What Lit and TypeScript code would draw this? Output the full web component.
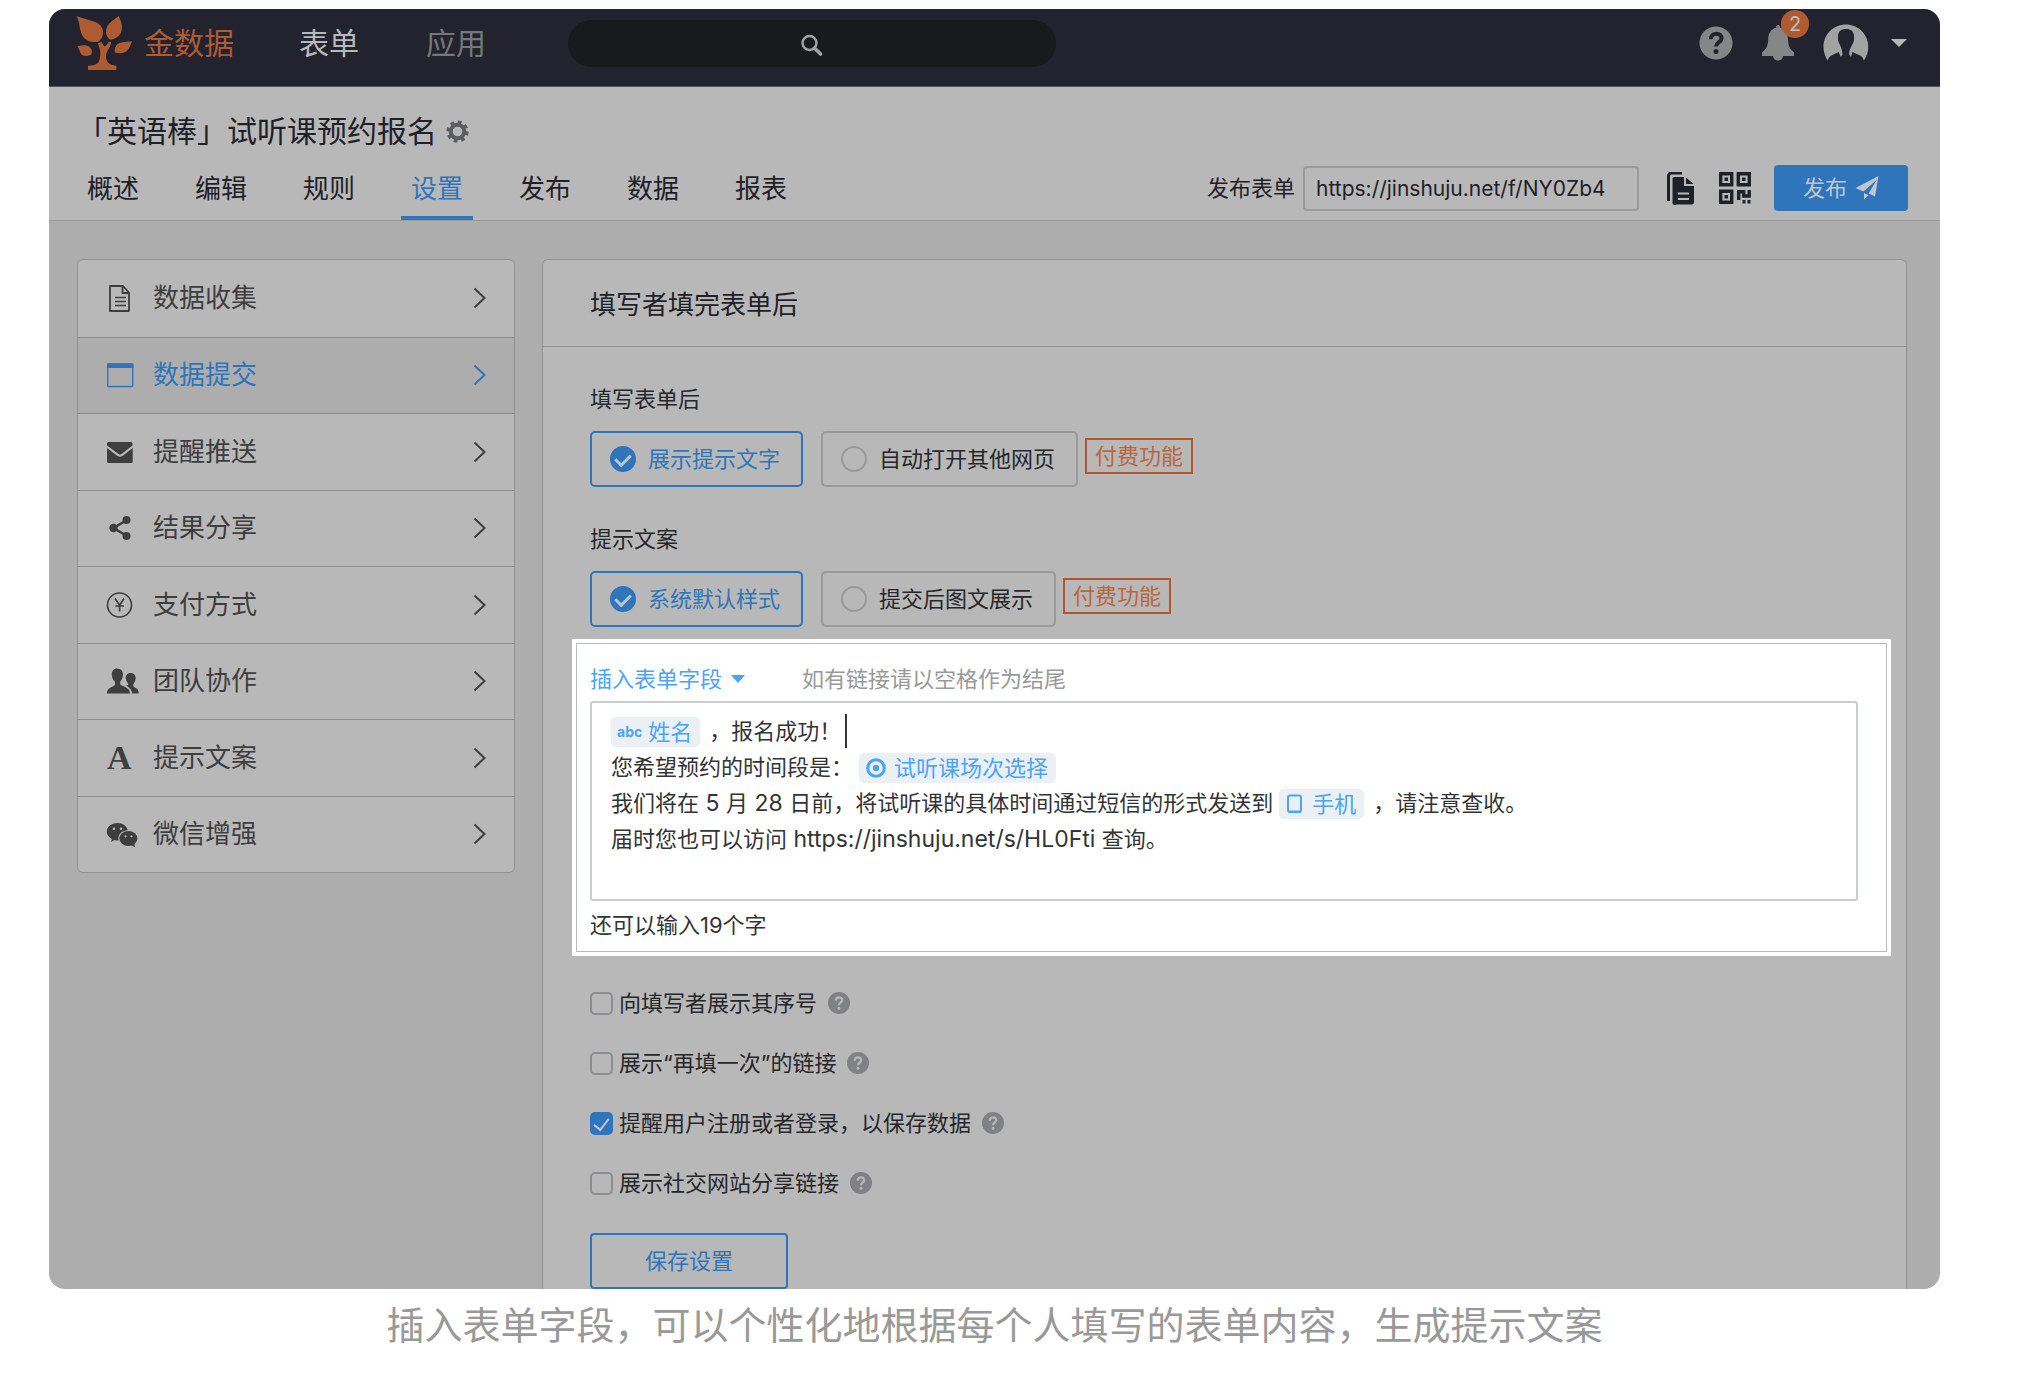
import { LitElement, html, css, svg, nothing } from "lit";
import { customElement, property, state } from "lit/decorators.js";
import { classMap } from "lit/directives/class-map.js";

const MENU_ICONS: Record<string, unknown> = {
  doc: svg`<path d="M4 2h13l6 6.5V27H4z M16.500 2v7H23" fill="none" stroke="currentColor" stroke-width="1.800" stroke-linejoin="round"/><path d="M9 13.500h11M9 17.500h11M9 21.500h11" fill="none" stroke="currentColor" stroke-width="1.600"/>`,
  window: svg`<rect x="1.700" y="3" width="25" height="22.500" rx="1" fill="none" stroke="currentColor" stroke-width="1.400"/><path d="M1 2.500h26.500V7H1z" fill="currentColor"/>`,
  mail: svg`<path d="M2.500 4h22.500a1.500 1.500 0 0 1 1.500 1.500V7.500L15.500 16q-1.500 1-3 0L1 7.500V5.500A1.500 1.500 0 0 1 2.500 4z M1 10l10.500 8q2.500 1.600 5 0L26.700 10v13.500a1.500 1.500 0 0 1-1.500 1.500H2.500A1.500 1.500 0 0 1 1 23.500z" fill="currentColor"/>`,
  share: svg`<path d="M21 6L7.500 14L21 22" fill="none" stroke="currentColor" stroke-width="2.600"/><circle cx="20.500" cy="6" r="4" fill="currentColor"/><circle cx="7.500" cy="14" r="4.200" fill="currentColor"/><circle cx="20.500" cy="22" r="4" fill="currentColor"/>`,
  yen: svg`<circle cx="13.500" cy="14" r="12" fill="none" stroke="currentColor" stroke-width="1.600"/><path d="M9 7.500l4.600 6.700L18 7.500M13.600 14v6.500M9.300 15h8.600" fill="none" stroke="currentColor" stroke-width="1.700"/>`,
  team: svg`<path d="M11 1.500c3.800 0 6.300 2.800 6 6.500-.3 3.500-1.800 5.500-2.800 6.800-.3 2.200 0 3 2 3.900 3.300 1.500 7.300 2.300 8 7.800H.800c.3-4.500 3-5.800 6.500-7.300 2-1 2-1.900 1.700-4.400-1.300-1.300-3-3.500-3.200-6.800C5.500 4 7.700 1.500 11 1.500z" fill="currentColor"/><path d="M24.600 6c3.300 0 5.300 2.400 5 5.500-.2 3-1.400 4.600-2.300 5.700-.2 2 .2 2.700 1.600 3.400 2.200 1.100 3.600 1.800 3.800 5.900h-6.500c-.6-4-3-6.300-5.800-7.700 1.500-.7 2.100-1.200 2-2-1-1.200-2.300-2.800-2.600-5.300-.3-3.100 1.500-5.500 4.800-5.500z" fill="currentColor"/>`,
  wechat: svg`<path d="M11.500 3C17 3 21 6.400 21.700 10.300c-5.400.2-9.300 3.600-9.300 8 0 .8.100 1.500.4 2.200-1.500.1-3-.1-4.400-.5L5 22l.9-3C2.700 17.200.800 14.700.800 11.700.800 6.800 5.500 3 11.500 3z" fill="currentColor"/><ellipse cx="22.400" cy="18.500" rx="9" ry="7.600" fill="currentColor"/><path d="M25 25l4 2.200-.8-4.200z" fill="currentColor"/><g fill="#b8b8b8"><circle cx="8" cy="8.700" r="1.300"/><circle cx="15" cy="8.700" r="1.300"/><circle cx="19.500" cy="16.300" r="1.100"/><circle cx="25.500" cy="16.300" r="1.100"/></g>`,
};

const MENU = [
  { label: "数据收集", icon: "doc" },
  { label: "数据提交", icon: "window", active: true },
  { label: "提醒推送", icon: "mail" },
  { label: "结果分享", icon: "share" },
  { label: "支付方式", icon: "yen" },
  { label: "团队协作", icon: "team" },
  { label: "提示文案", icon: "letter" },
  { label: "微信增强", icon: "wechat" },
];

const TABS = ["概述", "编辑", "规则", "设置", "发布", "数据", "报表"];

const shared = css`
  :host {
    display: block;
    font-family: Inter, "Noto Sans CJK SC", sans-serif;
    line-height: 32px;
  }
  * {
    box-sizing: border-box;
  }
  a {
    color: inherit;
    text-decoration: none;
  }
  button,
  input {
    font: inherit;
    color: inherit;
    margin: 0;
  }
  button {
    background: none;
    border: 0;
    padding: 0;
    cursor: pointer;
  }
  svg {
    display: block;
    flex: none;
  }
`;

@customElement("top-bar")
class TopBar extends LitElement {
  static styles = [
    shared,
    css`
      .bar {
        display: flex;
        align-items: center;
        height: 78px;
        padding: 0 33px 9px 27px;
        background: #22232e;
        border-bottom: 1px solid #55555a;
        font-size: 30px;
      }
      .brand {
        display: flex;
        align-items: center;
        gap: 10px;
        color: #ae5b32;
      }
      .nav {
        display: flex;
        gap: 67px;
        margin-left: 65px;
        color: #b8b8b8;
      }
      .muted {
        color: #77777a;
      }
      .search {
        position: relative;
        flex: 0 1 488px;
        margin-left: 82px;
      }
      .search input {
        display: block;
        width: 100%;
        height: 47px;
        padding: 0 24px;
        border: 0;
        border-radius: 24px;
        outline: 0;
        background: #191a1e;
        font-size: 22px;
        color: #b8b8b8;
      }
      .glass {
        position: absolute;
        left: calc(50% - 11px);
        top: 14px;
        pointer-events: none;
      }
      .tools {
        display: flex;
        align-items: center;
        gap: 28px;
        margin-left: auto;
      }
      .bell {
        position: relative;
      }
      .count {
        position: absolute;
        left: 20px;
        top: -15px;
        width: 28px;
        height: 28px;
        border-radius: 14px;
        background: #ae5b32;
        color: #c4bdb8;
        font-size: 20px;
        line-height: 28px;
        text-align: center;
      }
      .account {
        display: flex;
        align-items: center;
        gap: 22px;
      }
    `,
  ];

  render() {
    return html`<header class="bar">
      <a class="brand" href="#">
        <svg width="58" height="56" viewBox="76 14 58 56" fill="#ae5b32" aria-hidden="true">
          <path d="M76.500 15c6 3 14 3.500 20 6.500 5 2.500 7.200 7 6.300 12-.6 3.500-2.500 6-5 7.500-7 .5-13-1.500-15.500-6.500C79 28 80 21 76.500 15z"/>
          <path d="M118.700 15c2 4.500 3.800 8.500 3.200 13.500-.8 5.500-5.500 9.300-11.500 10.200-3.500-2-4.900-5.700-4.200-10C107.300 22 114 19 118.700 15z"/>
          <path d="M77.300 45.500c5-1.800 10-1.500 12.500.8 2.200 2 2.600 4.300 1.700 7-2.500 1.700-6.500 2.200-9.200.7-2.300-1.500-2.700-6-5-8.500z"/>
          <path d="M132.200 40c-2 4-2.500 8-6 10.500-3 2-7.500 2-11.400 1-.5-3.500.3-6.500 3-8.500 4-2.800 9.500-1.700 14.400-3z"/>
          <path d="M98 42.300l3.500-1.300c1.500 2.500 2.300 4 3.300 4.500 1.500-.7 2.500-2.500 4-5l2.400.7c-.5 5-4 7.500-5 12-.7 4 .3 7.500 3.300 9.500 2 1.200 4.500 1.700 6.900 1.800V69H88v-4.300c4.500-.2 8.300-.7 10.300-3.200 2-3 2.200-8.500 1.700-12-.3-2.700-1.300-5-2-7.200z"/>
        </svg>
        <span>金数据</span>
      </a>
      <nav class="nav">
        <a href="#">表单</a>
        <a class="muted" href="#">应用</a>
      </nav>
      <form class="search" role="search">
        <input type="text" aria-label="搜索" />
        <svg class="glass" width="22" height="22" viewBox="0 0 22 22" fill="none" stroke="#a2a2a3" aria-hidden="true">
          <circle cx="8.500" cy="9" r="7" stroke-width="2.400"/>
          <path d="M13.500 14l6 6" stroke-width="3.600" stroke-linecap="round"/>
        </svg>
      </form>
      <div class="tools">
        <button aria-label="帮助">
          <svg width="34" height="34" viewBox="0 0 34 34" aria-hidden="true">
            <circle cx="17" cy="17" r="16.500" fill="#858688"/>
            <path d="M11.800 13.200c0-7.500 11.200-7 10.700-.7-.3 4-5.500 4-5.500 8" fill="none" stroke="#22232e" stroke-width="4"/>
            <circle cx="17" cy="25.500" r="2.500" fill="#22232e"/>
          </svg>
        </button>
        <button class="bell" aria-label="通知">
          <svg width="34" height="36" viewBox="0 0 34 36" fill="#858688" aria-hidden="true">
            <path d="M17 0c1.500 0 2 1 2 2.700 5 1.300 7.800 5.300 8 11 .2 6.500 1 10 6 13.500V31H1v-3.800c5-3.500 6-7 6.200-13.500.2-5.700 3-9.700 7.900-11C15.100 1 15.600 0 17 0z"/>
            <path d="M12 31h10c-.3 3-2.500 4.600-5 4.600S12.300 34 12 31z"/>
          </svg>
          <span class="count">2</span>
        </button>
        <button class="account" aria-label="账户">
          <svg width="46" height="38" viewBox="0 0 46 38" aria-hidden="true">
            <path d="M4.800 36.800C2 32.500.500 27.800.500 22.800.500 10.500 10.500.500 22.900.500s22.400 10 22.400 22.300c0 5-1.700 9.700-4.500 14-.5-2-1.300-3.800-2.800-4.800L29.500 28 28 33l-2-3 .5-3.500L29 21c1.800-2.500 2.300-5.500 2-9-.3-4.500-3-7-8-7s-7.700 2.500-8 7c-.2 3.500.3 6.500 2 9l1.800 4.500.7 5L18 33l-2.500-5L7.500 32c-1.500 1-2.200 2.800-2.700 4.800z" fill="#a2a2a3"/>
          </svg>
          <svg width="16" height="8" viewBox="0 0 16 8" aria-hidden="true"><path d="M0 0h16L8 8z" fill="#b8b8b8"/></svg>
        </button>
      </div>
    </header>`;
  }
}

@customElement("form-header")
class FormHeader extends LitElement {
  @state() private active = "设置";

  static styles = [
    shared,
    css`
      .head {
        padding: 22px 32px 0 28px;
        background: #b8b8b8;
        border-bottom: 1px solid #999;
        color: #1f2128;
      }
      .title {
        display: flex;
        align-items: center;
        gap: 9px;
        margin: 0;
        font-size: 30px;
        font-weight: 400;
        line-height: 44px;
      }
      .row {
        display: flex;
        align-items: center;
        justify-content: space-between;
        margin-top: 3px;
      }
      .tabs {
        display: flex;
        gap: 36px;
      }
      .tab {
        padding: 6px 10px 0;
        border-bottom: 4px solid transparent;
        font-size: 26px;
        line-height: 54px;
      }
      .on {
        border-color: #2f75bb;
        color: #2f75bb;
      }
      .publish {
        display: flex;
        align-items: center;
        font-size: 22px;
      }
      .link {
        width: 336px;
        height: 45px;
        margin: 0 28px 0 8px;
        padding: 0 11px;
        border: 2px solid #9a9a9a;
        border-radius: 4px;
        outline: 0;
        background: transparent;
        font-size: 21px;
      }
      .qr {
        margin: 0 23px 0 25px;
      }
      .go {
        display: flex;
        align-items: center;
        justify-content: center;
        gap: 8px;
        width: 134px;
        height: 46px;
        border-radius: 4px;
        background: #2f75bb;
        color: #c0c6cc;
      }
    `,
  ];

  render() {
    return html`<section class="head">
      <h1 class="title">
        「英语棒」试听课预约报名
        <button aria-label="表单设置">
          <svg width="23" height="23" viewBox="0 0 23 23" fill="none" stroke="#5b5c60" aria-hidden="true">
            <circle cx="11.500" cy="11.500" r="6.800" stroke-width="4"/>
            <circle cx="11.500" cy="11.500" r="9.600" stroke-width="3" stroke-dasharray="3.770 3.770"/>
          </svg>
        </button>
      </h1>
      <div class="row">
        <nav class="tabs">
          ${TABS.map(
            (t) => html`<a href="#" class=${classMap({ tab: true, on: t === this.active })}
              @click=${(e: Event) => { e.preventDefault(); this.active = t; }}>${t}</a>`
          )}
        </nav>
        <div class="publish">
          <label for="link">发布表单</label>
          <input class="link" id="link" type="text" readonly value="https://jinshuju.net/f/NY0Zb4" />
          <button aria-label="复制">
            <svg width="27" height="33" viewBox="0 0 27 33" aria-hidden="true">
              <path d="M1.500 29V4a3 3 0 0 1 3-3H15" fill="none" stroke="#1f2128" stroke-width="3"/>
              <path d="M7 5h10v9h10v16a2.500 2.500 0 0 1-2.500 2.500h-15A2.500 2.500 0 0 1 5.500 30V6.500A1.500 1.500 0 0 1 7 5z M19 5.500l7.500 6.500H19z" fill="#1f2128"/>
              <path d="M11 21.500h11M11 27h11" stroke="#b8b8b8" stroke-width="2"/>
            </svg>
          </button>
          <button class="qr" aria-label="二维码">
            <svg width="32" height="32" viewBox="0 0 32 32" aria-hidden="true">
              <g fill="none" stroke="#1f2128" stroke-width="3.400">
                <path d="M1.700 1.700h11v11h-11zM19.300 1.700h11v11h-11zM1.700 19.300h11v11h-11z"/>
                <path d="M19.700 28v-8.300h5v4.300h5.500v-6"/>
              </g>
              <path d="M5.500 5.500h3.500v3.500h-3.500zM23 5.500h3.500v3.500h-3.500zM5.500 23h3.500v3.500h-3.500zM23.500 28h3v3.500h-3zM28.500 28h3v3.500h-3z" fill="#1f2128"/>
            </svg>
          </button>
          <button class="go">
            发布
            <svg width="24" height="24" viewBox="0 0 24 24" fill="#c0c6cc" aria-hidden="true">
              <path d="M23.500 0L20 20.500l-6.500-3L22 3.500 8.500 15.500.500 12z M9 17l4.500 2.200L9 23.500z"/>
            </svg>
          </button>
        </div>
      </div>
    </section>`;
  }
}

@customElement("side-menu")
class SideMenu extends LitElement {
  static styles = [
    shared,
    css`
      .menu {
        display: grid;
        grid-auto-rows: 1fr;
        min-height: 614px;
        margin: 0;
        padding: 0;
        list-style: none;
        border: 1px solid #929292;
        border-radius: 6px;
        overflow: hidden;
        background: #b8b8b8;
        color: #3e3e3f;
        font-size: 26px;
      }
      .item + .item {
        border-top: 1px solid #8c8c8c;
      }
      .item a {
        display: flex;
        align-items: center;
        height: 100%;
        padding: 0 28px;
      }
      .icon {
        display: flex;
        align-items: center;
        width: 47px;
        height: 28px;
      }
      .letter {
        padding-left: 1px;
        font: 700 34px "Liberation Serif", serif;
      }
      .label {
        flex: 1;
      }
      .on {
        background: #adadad;
        color: #2f75bb;
      }
    `,
  ];

  render() {
    return html`<ul class="menu">
      ${MENU.map(
        (m) => html`<li class=${classMap({ item: true, on: !!m.active })}>
          <a href="#" aria-current=${m.active ? "page" : nothing}>
            <span class="icon" aria-hidden="true">${m.icon === "letter"
              ? html`<span class="letter">A</span>`
              : html`<svg width="34" height="28" viewBox="0 0 34 28">${MENU_ICONS[m.icon]}</svg>`}</span>
            <span class="label">${m.label}</span>
            <svg width="13" height="22" viewBox="0 0 13 22" fill="none" stroke="currentColor" stroke-width="2" aria-hidden="true"><path d="M1.500 1.500L11.500 11L1.500 20.500"/></svg>
          </a>
        </li>`
      )}
    </ul>`;
  }
}

@customElement("choice-row")
class ChoiceRow extends LitElement {
  @property() label = "";
  @property({ attribute: false }) options: string[] = [];
  @state() private picked = 0;

  static styles = [
    shared,
    css`
      .group {
        margin: 0;
        padding: 0;
        border: 0;
        font-size: 22px;
        color: #26272b;
      }
      .legend {
        padding: 0;
        margin-bottom: 16px;
      }
      .row {
        display: flex;
        align-items: center;
      }
      .option {
        display: flex;
        align-items: center;
        gap: 12px;
        height: 56px;
        padding: 0 21px 0 18px;
        border: 2px solid #999;
        border-radius: 5px;
      }
      .option + .option {
        margin-left: 18px;
      }
      .on {
        border-color: #2f75bb;
        color: #2f75bb;
      }
      .dot {
        appearance: none;
        display: flex;
        justify-content: center;
        width: 26px;
        height: 26px;
        border: 2px solid #999;
        border-radius: 13px;
      }
      .dot:checked {
        border-color: #2f75bb;
        background: #2f75bb;
      }
      .dot:checked::before {
        content: "";
        width: 7px;
        height: 12px;
        margin-top: 3px;
        border: solid #b8c4d0;
        border-width: 0 3px 3px 0;
        rotate: 45deg;
      }
      .tag {
        margin: 0 0 6px 7px;
        padding: 0 8px;
        border: 2px solid #b0582b;
        color: #b8683c;
      }
    `,
  ];

  render() {
    return html`<fieldset class="group">
      <legend class="legend">${this.label}</legend>
      <div class="row">
        ${this.options.map(
          (o, i) => html`<label class=${classMap({ option: true, on: this.picked === i })}>
            <input class="dot" type="radio" name="choice" .checked=${this.picked === i} @change=${() => (this.picked = i)} />
            ${o}
          </label>`
        )}
        <span class="tag">付费功能</span>
      </div>
    </fieldset>`;
  }
}

@customElement("message-editor")
class MessageEditor extends LitElement {
  static styles = [
    shared,
    css`
      .outer {
        padding: 4px;
        background: #fff;
        font-size: 22px;
        color: #333436;
      }
      .inner {
        padding: 19px 28px 10px 13px;
        border: 1px solid #b8bcc2;
      }
      .bar {
        display: flex;
        align-items: center;
        gap: 57px;
      }
      .insert {
        display: flex;
        align-items: center;
        gap: 9px;
        color: #4aa5f7;
      }
      .hint {
        color: #999;
      }
      .box {
        min-height: 200px;
        margin: 6px 0 8px;
        padding: 10px 19px;
        border: 2px solid #cacdd0;
        border-radius: 3px;
        outline: 0;
      }
      .line {
        display: flex;
        align-items: center;
        height: 36px;
        white-space: pre;
      }
      .latin {
        font-size: 23px;
      }
      .chip {
        display: flex;
        align-items: center;
        gap: 6px;
        height: 30px;
        margin: 2px 9px 0 0;
        padding: 0 8px 0 6px;
        border-radius: 5px;
        background: #ebf0f4;
        color: #4aa5f7;
      }
      .spaced {
        margin-left: 6px;
        padding-left: 7px;
        gap: 8px;
      }
      .abc {
        font-size: 14px;
        font-weight: 700;
      }
      .cursor {
        width: 2px;
        height: 34px;
        margin-left: 4px;
        background: #333436;
      }
      .left {
        margin: 0;
      }
    `,
  ];

  render() {
    return html`<section class="outer"><div class="inner">
      <div class="bar">
        <button class="insert">插入表单字段<svg width="14" height="8" viewBox="0 0 14 8" aria-hidden="true"><path d="M0 0h14L7 8z" fill="currentColor"/></svg></button>
        <span class="hint">如有链接请以空格作为结尾</span>
      </div>
      <div class="box" role="textbox" aria-multiline="true" aria-label="提示文案" contenteditable="true">
        <div class="line"><span class="chip"><span class="abc">abc</span>姓名</span><span>，报名成功！</span><span class="cursor"></span></div>
        <div class="line"><span>您希望预约的时间段是：</span><span class="chip spaced"><svg width="20" height="20" viewBox="0 0 20 20" aria-hidden="true"><circle cx="10" cy="10" r="8.300" fill="none" stroke="#4aa5f7" stroke-width="3"/><circle cx="10" cy="10" r="3.200" fill="#4aa5f7"/></svg>试听课场次选择</span></div>
        <div class="line"><span>我们将在<span class="latin"> 5 </span>月<span class="latin"> 28 </span>日前，将试听课的具体时间通过短信的形式发送到</span><span class="chip spaced"><svg width="18" height="20" viewBox="0 0 18 20" aria-hidden="true"><rect x="2" y="1.500" width="13" height="16.500" rx="2" fill="none" stroke="#4aa5f7" stroke-width="2"/><path d="M2 16.500h13v2H2z" fill="#4aa5f7"/></svg>手机</span><span>，请注意查收。</span></div>
        <div class="line"><span>届时您也可以访问<span class="latin"> https://jinshuju.net/s/HL0Fti </span>查询。</span></div>
      </div>
      <p class="left">还可以输入19个字</p>
    </div></section>`;
  }
}

@customElement("check-option")
class CheckOption extends LitElement {
  @property() label = "";
  @property({ type: Boolean }) checked = false;

  static styles = [
    shared,
    css`
      .row {
        display: flex;
        align-items: center;
        gap: 11px;
        font-size: 22px;
        color: #26272b;
      }
      .field {
        display: flex;
        align-items: center;
        gap: 6px;
      }
      .box {
        appearance: none;
        display: flex;
        justify-content: center;
        width: 23px;
        height: 23px;
        border: 2px solid #8c8d8f;
        border-radius: 5px;
      }
      .box:checked {
        border-color: #2f75bb;
        background: #2f75bb;
      }
      .box:checked::before {
        content: "";
        width: 7px;
        height: 13px;
        margin-top: 1px;
        border: solid #c0c6cc;
        border-width: 0 2px 2px 0;
        rotate: 38deg;
      }
    `,
  ];

  render() {
    return html`<div class="row">
      <label class="field"><input class="box" type="checkbox" .checked=${this.checked} />${this.label}</label>
      <button aria-label="说明">
        <svg width="22" height="22" viewBox="0 0 22 22" aria-hidden="true">
          <circle cx="11" cy="11" r="11" fill="#808184"/>
          <path d="M7.800 8.700c0-4.500 6.600-4.300 6.400-.5-.2 2.500-3.200 2.500-3.200 5" fill="none" stroke="#b8b8b8" stroke-width="2.200"/>
          <circle cx="11" cy="16.300" r="1.500" fill="#b8b8b8"/>
        </svg>
      </button>
    </div>`;
  }
}

@customElement("app-root")
class AppRoot extends LitElement {
  static styles = [
    shared,
    css`
      .page {
        margin: 0;
        padding: 9px 88px 28px 49px;
        background: #fff;
      }
      .frame {
        border-radius: 16px;
        overflow: hidden;
        background: #adadad;
      }
      .body {
        display: flex;
        align-items: flex-start;
        gap: 27px;
        padding: 38px 33px 0 28px;
      }
      .side {
        flex: 0 0 438px;
      }
      .panel {
        flex: 1;
        min-width: 0;
        border: 1px solid #929292;
        border-bottom: 0;
        border-radius: 6px 6px 0 0;
        background: #b8b8b8;
      }
      .heading {
        margin: 0;
        padding: 27px 47px 23px;
        border-bottom: 1px solid #929292;
        font-size: 26px;
        font-weight: 400;
        line-height: 36px;
        color: #1f2128;
      }
      .content {
        padding: 36px 47px 0;
      }
      .next {
        margin-top: 36px;
      }
      .editor {
        margin: 12px -32px 31px -18px;
      }
      .checks {
        display: grid;
        gap: 28px;
      }
      .save {
        display: block;
        width: 198px;
        height: 56px;
        margin-top: 34px;
        border: 2px solid #2f75bb;
        border-radius: 4px;
        color: #2f75bb;
        font-size: 22px;
      }
      .caption {
        margin-top: 8px;
        font-size: 38px;
        line-height: 56px;
        text-align: center;
        color: #999;
      }
    `,
  ];

  render() {
    return html`<figure class="page">
      <div class="frame">
        <top-bar></top-bar>
        <form-header></form-header>
        <main class="body">
          <side-menu class="side"></side-menu>
          <section class="panel">
            <h2 class="heading">填写者填完表单后</h2>
            <div class="content">
              <choice-row label="填写表单后" .options=${["展示提示文字", "自动打开其他网页"]}></choice-row>
              <choice-row class="next" label="提示文案" .options=${["系统默认样式", "提交后图文展示"]}></choice-row>
              <message-editor class="editor"></message-editor>
              <div class="checks">
                <check-option label="向填写者展示其序号"></check-option>
                <check-option label="展示“再填一次”的链接"></check-option>
                <check-option label="提醒用户注册或者登录，以保存数据" checked></check-option>
                <check-option label="展示社交网站分享链接"></check-option>
              </div>
              <button class="save">保存设置</button>
            </div>
          </section>
        </main>
      </div>
      <figcaption class="caption">插入表单字段，可以个性化地根据每个人填写的表单内容，生成提示文案</figcaption>
    </figure>`;
  }
}
